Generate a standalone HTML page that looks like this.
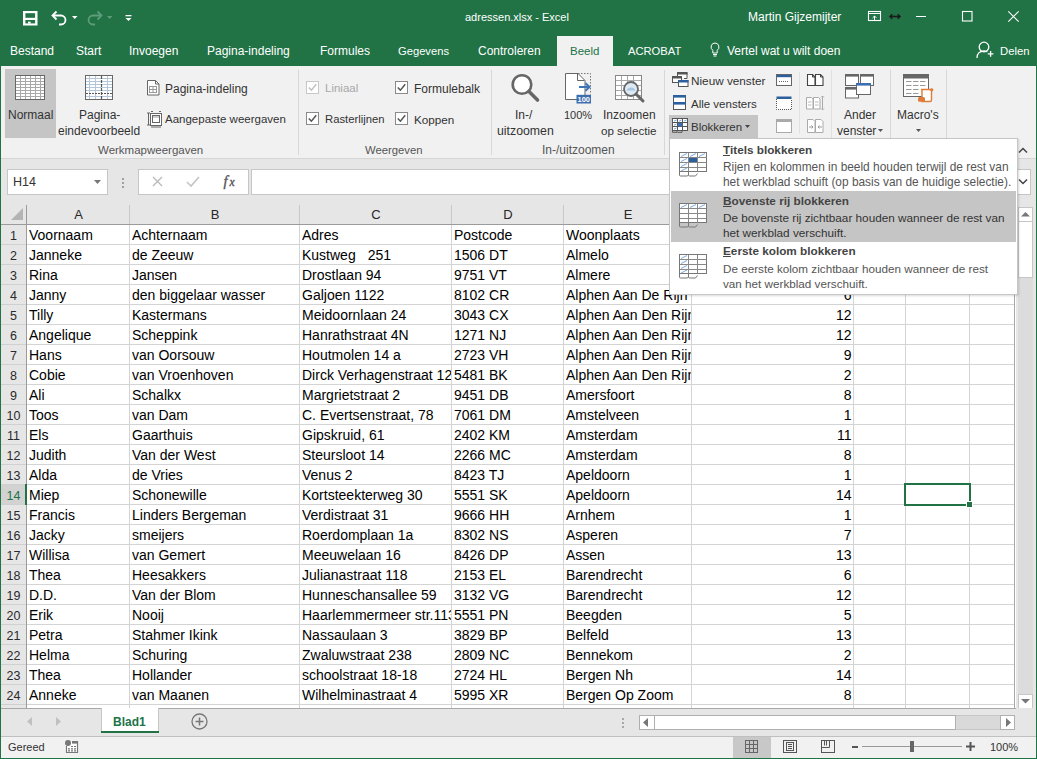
<!DOCTYPE html><html><head><meta charset="utf-8"><style>
*{margin:0;padding:0;box-sizing:border-box}
html,body{width:1037px;height:759px;overflow:hidden;background:#fff;font-family:"Liberation Sans",sans-serif}
.t{position:absolute;white-space:pre;line-height:1}
.r{position:absolute}
.s{position:absolute;overflow:visible}
</style></head><body>

<div class="r" style="left:0px;top:0px;width:1037px;height:66px;background:#217346;"></div>
<div class="r" style="left:0px;top:0px;width:1px;height:759px;background:#217346;"></div>
<div class="r" style="left:1036px;top:0px;width:1px;height:759px;background:#217346;"></div>
<div class="r" style="left:0px;top:758px;width:1037px;height:1px;background:#217346;"></div>
<svg class="s" style="left:23px;top:11px;" width="15" height="15" viewBox="0 0 15 15"><rect x="0" y="0" width="14.5" height="14.5" fill="#fff"/><rect x="2.4" y="2.2" width="9.7" height="4.6" fill="#217346"/><rect x="2.4" y="9" width="9.7" height="3.4" fill="#217346"/><rect x="5" y="10.6" width="2.6" height="2" fill="#fff"/></svg>
<svg class="s" style="left:50px;top:10px;" width="18" height="16" viewBox="0 0 18 16"><path d="M3 5.5h8a4.5 4.5 0 0 1 0 9H9" fill="none" stroke="#fff" stroke-width="1.8"/><path d="M6.5 1.5L2.5 5.5l4 4" fill="none" stroke="#fff" stroke-width="1.8"/></svg>
<svg class="s" style="left:72px;top:16px;" width="6" height="4" viewBox="0 0 6 4"><path d="M0 0h5.5L2.75 3z" fill="#fff"/></svg>
<svg class="s" style="left:86px;top:10px;" width="18" height="16" viewBox="0 0 18 16"><path d="M15 5.5H7a4.5 4.5 0 0 0 0 9h2" fill="none" stroke="#5d9c7a" stroke-width="1.8"/><path d="M11.5 1.5l4 4-4 4" fill="none" stroke="#5d9c7a" stroke-width="1.8"/></svg>
<svg class="s" style="left:107px;top:16px;" width="6" height="4" viewBox="0 0 6 4"><path d="M0 0h5.5L2.75 3z" fill="#5d9c7a"/></svg>
<svg class="s" style="left:125px;top:14px;" width="8" height="8" viewBox="0 0 8 8"><rect x="0.5" y="1" width="6" height="1.3" fill="#fff"/><path d="M0.5 4h6L3.5 7z" fill="#fff"/></svg>
<div class="t" style="left:465px;top:11.69px;font-size:11px;color:#fff;font-weight:normal;">adressen.xlsx - Excel</div>
<div class="t" style="left:748px;top:10.84px;font-size:12px;color:#fff;font-weight:normal;">Martin Gijzemijter</div>
<svg class="s" style="left:868px;top:11px;" width="14" height="11" viewBox="0 0 14 11"><rect x="0.5" y="0.5" width="12" height="9" fill="none" stroke="#fff" stroke-width="1.1"/><path d="M1 2.5h11" stroke="#fff" stroke-width="1"/><path d="M6.5 9.5V5M4.6 6.9L6.5 5l1.9 1.9" fill="none" stroke="#fff" stroke-width="1"/></svg>
<svg class="s" style="left:889px;top:13px;" width="12" height="7" viewBox="0 0 12 7"><path d="M2 3.5h8" stroke="#1a1a1a" stroke-width="1.6"/><path d="M3.3 1.2L1 3.5l2.3 2.3M8.7 1.2L11 3.5 8.7 5.8" fill="none" stroke="#1a1a1a" stroke-width="1.5"/></svg>
<div class="r" style="left:916px;top:16px;width:10px;height:1px;background:#fff;"></div>
<svg class="s" style="left:962px;top:11px;" width="11" height="11" viewBox="0 0 11 11"><rect x="0.5" y="0.5" width="9.5" height="9.5" fill="none" stroke="#fff" stroke-width="1.1"/></svg>
<svg class="s" style="left:1008px;top:11px;" width="11" height="11" viewBox="0 0 11 11"><path d="M0.3 0.3l10.4 10.4M10.7 0.3L0.3 10.7" stroke="#fff" stroke-width="1.1"/></svg>
<div class="t" style="left:10px;top:45.34px;font-size:12px;color:#fff;font-weight:normal;">Bestand</div>
<div class="t" style="left:76px;top:45.34px;font-size:12px;color:#fff;font-weight:normal;">Start</div>
<div class="t" style="left:129px;top:45.34px;font-size:12px;color:#fff;font-weight:normal;">Invoegen</div>
<div class="t" style="left:207px;top:45.34px;font-size:12px;color:#fff;font-weight:normal;">Pagina-indeling</div>
<div class="t" style="left:320px;top:45.34px;font-size:12px;color:#fff;font-weight:normal;">Formules</div>
<div class="t" style="left:398px;top:46.02px;font-size:11.2px;color:#fff;font-weight:normal;">Gegevens</div>
<div class="t" style="left:478px;top:45.34px;font-size:12px;color:#fff;font-weight:normal;">Controleren</div>
<div class="r" style="left:557px;top:36px;width:56px;height:30px;background:#f1f1f1;"></div>
<div class="t" style="left:570px;top:45.77px;font-size:11.5px;color:#217346;font-weight:normal;">Beeld</div>
<div class="t" style="left:628px;top:46.02px;font-size:11.2px;color:#fff;font-weight:normal;">ACROBAT</div>
<svg class="s" style="left:710px;top:42px;" width="10" height="15" viewBox="0 0 10 15"><path d="M5 1a4 4 0 0 0-2.2 7.3V11h4.4V8.3A4 4 0 0 0 5 1z" fill="none" stroke="#fff" stroke-width="1"/><path d="M3 12.5h4M3.5 14h3" stroke="#fff" stroke-width="1"/></svg>
<div class="t" style="left:727px;top:45.34px;font-size:12px;color:#fff;font-weight:normal;">Vertel wat u wilt doen</div>
<svg class="s" style="left:976px;top:41px;" width="18" height="18" viewBox="0 0 18 18"><circle cx="8" cy="6" r="4.8" fill="none" stroke="#fff" stroke-width="1.3"/><path d="M1 17c0-4.5 3-7 7-7 1.3 0 2.4.3 3.3.8" fill="none" stroke="#fff" stroke-width="1.3"/><path d="M11.8 12.8h5.6M14.6 10v5.8" stroke="#fff" stroke-width="1.3"/></svg>
<div class="t" style="left:1000px;top:45.93px;font-size:11.3px;color:#fff;font-weight:normal;">Delen</div>
<div class="r" style="left:1px;top:66px;width:1035px;height:92px;background:#f1f1f1;"></div>
<div class="r" style="left:1px;top:158px;width:1035px;height:1px;background:#d5d5d5;"></div>
<div class="r" style="left:5px;top:69px;width:51px;height:69px;background:#c5c5c5;"></div>
<svg class="s" style="left:15px;top:75px;" width="30" height="25" viewBox="0 0 30 25"><rect x="0.5" y="0.5" width="29" height="24" fill="#fff" stroke="#666" stroke-width="1"/><path d="M5.5 1V24" stroke="#a8a8a8" stroke-width="1" /><path d="M10.5 1V24" stroke="#a8a8a8" stroke-width="1" /><path d="M15.5 1V24" stroke="#a8a8a8" stroke-width="1" /><path d="M20.5 1V24" stroke="#a8a8a8" stroke-width="1" /><path d="M25.5 1V24" stroke="#a8a8a8" stroke-width="1" /><path d="M1 3.5H29" stroke="#a8a8a8" stroke-width="1" /><path d="M1 6.5H29" stroke="#a8a8a8" stroke-width="1" /><path d="M1 9.5H29" stroke="#a8a8a8" stroke-width="1" /><path d="M1 12.5H29" stroke="#a8a8a8" stroke-width="1" /><path d="M1 15.5H29" stroke="#a8a8a8" stroke-width="1" /><path d="M1 18.5H29" stroke="#a8a8a8" stroke-width="1" /><path d="M1 21.5H29" stroke="#a8a8a8" stroke-width="1" /></svg>
<svg class="s" style="left:85px;top:75px;" width="28" height="25" viewBox="0 0 28 25"><rect x="0.5" y="0.5" width="27" height="24" fill="#fff" stroke="#666"/><path d="M4.5 1V24" stroke="#b4c6da"/><path d="M10.5 1V24" stroke="#b4c6da"/><path d="M22.5 1V24" stroke="#b4c6da"/><path d="M1 3.5H27" stroke="#b4c6da"/><path d="M1 6.5H27" stroke="#b4c6da"/><path d="M1 9.5H27" stroke="#b4c6da"/><path d="M1 12.5H27" stroke="#b4c6da"/><path d="M1 15.5H27" stroke="#b4c6da"/><path d="M1 21.5H27" stroke="#b4c6da"/><path d="M16.5 1V24" stroke="#555" stroke-width="1.2" stroke-dasharray="3 1"/><path d="M1 18.5H27" stroke="#555" stroke-width="1.2" stroke-dasharray="2 1"/></svg>
<div class="t" style="left:8px;top:108.84px;font-size:12px;color:#333;font-weight:normal;">Normaal</div>
<div class="t" style="left:79px;top:108.84px;font-size:12px;color:#333;font-weight:normal;">Pagina-</div>
<div class="t" style="left:58px;top:124.84px;font-size:12px;color:#333;font-weight:normal;">eindevoorbeeld</div>
<svg class="s" style="left:147px;top:80px;" width="13" height="16" viewBox="0 0 13 16"><path d="M0.5 0.5h8l3.5 3.5v11H0.5z" fill="#fff" stroke="#666"/><path d="M8.5 0.5v3.5h3.5" fill="none" stroke="#666"/><rect x="2.5" y="6.5" width="7" height="6" fill="none" stroke="#999"/><path d="M6 6.5v6M2.5 9.5h7" stroke="#999"/></svg>
<div class="t" style="left:165px;top:82.84px;font-size:12px;color:#333;font-weight:normal;">Pagina-indeling</div>
<svg class="s" style="left:146px;top:111px;" width="17" height="16" viewBox="0 0 17 16"><path d="M2.5 2v12M1 2h3M1 14h3" stroke="#666"/><rect x="4.5" y="2.5" width="11" height="12" fill="#fff" stroke="#666"/><rect x="6.5" y="4.5" width="7" height="7" fill="none" stroke="#666"/><path d="M7 6h6" stroke="#999"/><path d="M5 0.5h2M13 0.5h2M5 16h10" stroke="#666"/></svg>
<div class="t" style="left:165px;top:114.27px;font-size:11.5px;color:#333;font-weight:normal;">Aangepaste weergaven</div>
<div class="t" style="left:98px;top:144.87px;font-size:11.5px;color:#555;font-weight:normal;">Werkmapweergaven</div>
<div class="r" style="left:298px;top:70px;width:1px;height:85px;background:#d8d8d8;"></div>
<svg class="s" style="left:306px;top:81px;" width="13" height="13" viewBox="0 0 13 13"><rect x="0.5" y="0.5" width="12" height="12" fill="#fff" stroke="#c8c8c8"/><path d="M2.8 6.4l2.6 2.8 4.8-6" fill="none" stroke="#c0c0c0" stroke-width="1.5"/></svg>
<div class="t" style="left:325px;top:83.27px;font-size:11.5px;color:#a8a8a8;font-weight:normal;">Liniaal</div>
<svg class="s" style="left:306px;top:112px;" width="13" height="13" viewBox="0 0 13 13"><rect x="0.5" y="0.5" width="12" height="12" fill="#fff" stroke="#8a8a8a"/><path d="M2.8 6.4l2.6 2.8 4.8-6" fill="none" stroke="#555" stroke-width="1.5"/></svg>
<div class="t" style="left:325px;top:114.43px;font-size:11.3px;color:#333;font-weight:normal;">Rasterlijnen</div>
<svg class="s" style="left:395px;top:81px;" width="13" height="13" viewBox="0 0 13 13"><rect x="0.5" y="0.5" width="12" height="12" fill="#fff" stroke="#8a8a8a"/><path d="M2.8 6.4l2.6 2.8 4.8-6" fill="none" stroke="#555" stroke-width="1.5"/></svg>
<div class="t" style="left:414px;top:82.84px;font-size:12px;color:#333;font-weight:normal;">Formulebalk</div>
<svg class="s" style="left:395px;top:112px;" width="13" height="13" viewBox="0 0 13 13"><rect x="0.5" y="0.5" width="12" height="12" fill="#fff" stroke="#8a8a8a"/><path d="M2.8 6.4l2.6 2.8 4.8-6" fill="none" stroke="#555" stroke-width="1.5"/></svg>
<div class="t" style="left:414px;top:114.10px;font-size:11.7px;color:#333;font-weight:normal;">Koppen</div>
<div class="t" style="left:365px;top:145.03px;font-size:11.3px;color:#555;font-weight:normal;">Weergeven</div>
<div class="r" style="left:491px;top:70px;width:1px;height:85px;background:#d8d8d8;"></div>
<svg class="s" style="left:510px;top:73px;" width="32" height="30" viewBox="0 0 32 30"><circle cx="12" cy="11.5" r="9.3" fill="#fff" stroke="#666" stroke-width="2.6"/><path d="M19 18.5l8.5 8.5" stroke="#666" stroke-width="3.6" stroke-linecap="round"/></svg>
<div class="t" style="left:515px;top:108.84px;font-size:12px;color:#333;font-weight:normal;">In-/</div>
<div class="t" style="left:497px;top:124.59px;font-size:12.3px;color:#333;font-weight:normal;">uitzoomen</div>
<svg class="s" style="left:564px;top:72px;" width="30" height="33" viewBox="0 0 30 33"><path d="M1.5 1.5h12.5l7 7v19H1.5z" fill="#fff" stroke="#666"/><path d="M13.5 1.5v7h7" fill="none" stroke="#666"/><path d="M14 1.5h12.5v21" fill="none" stroke="#777" stroke-dasharray="1.5 1.5"/><path d="M15 15h10M21.5 11.3L25.5 15l-4 3.7" fill="none" stroke="#3d74b8" stroke-width="2"/><rect x="12.5" y="22.8" width="14.5" height="8.7" fill="#3d6fb0"/><text x="19.8" y="30" font-size="7.5" font-family="Liberation Sans" fill="#fff" text-anchor="middle" font-weight="bold">100</text></svg>
<div class="t" style="left:564px;top:109.69px;font-size:11px;color:#333;font-weight:normal;">100%</div>
<svg class="s" style="left:615px;top:75px;" width="31" height="30" viewBox="0 0 31 30"><rect x="0.5" y="0.5" width="26" height="24" fill="#fff" stroke="#888"/><path d="M6.5 1V24" stroke="#aaa"/><path d="M12.5 1V24" stroke="#aaa"/><path d="M18.5 1V24" stroke="#aaa"/><path d="M1 5.5H26" stroke="#aaa"/><path d="M1 10.5H26" stroke="#aaa"/><path d="M1 15.5H26" stroke="#aaa"/><path d="M1 20.5H26" stroke="#aaa"/><circle cx="16" cy="14" r="7" fill="#dfe9f3" stroke="#666" stroke-width="1.8"/><path d="M11.5 15.5c1-2 2.5-3 4.5-3s3.5 1 4.5 3" fill="#a8c6e6"/><path d="M21 19l7 7" stroke="#666" stroke-width="3" stroke-linecap="round"/></svg>
<div class="t" style="left:603px;top:108.84px;font-size:12px;color:#333;font-weight:normal;">Inzoomen</div>
<div class="t" style="left:601px;top:125.18px;font-size:11.6px;color:#333;font-weight:normal;">op selectie</div>
<div class="t" style="left:542px;top:144.44px;font-size:12px;color:#555;font-weight:normal;">In-/uitzoomen</div>
<div class="r" style="left:664px;top:70px;width:1px;height:85px;background:#d8d8d8;"></div>
<div class="r" style="left:669px;top:115px;width:89px;height:23px;background:#c5c5c5;"></div>
<svg class="s" style="left:672px;top:72px;" width="17" height="15" viewBox="0 0 17 15"><path d="M5.5 4V0.5h9.5v6h-3" fill="#fff" stroke="#555"/><rect x="5" y="0" width="10.5" height="2.5" fill="#555"/><rect x="0.5" y="4.5" width="9" height="6" fill="#fff" stroke="#555"/><rect x="0" y="4" width="10" height="2.5" fill="#555"/><rect x="6.5" y="8.5" width="9.5" height="6" fill="#fff" stroke="#555"/><rect x="6" y="8" width="10.5" height="2.5" fill="#2c5f9e"/></svg>
<div class="t" style="left:691px;top:75.05px;font-size:11.75px;color:#333;font-weight:normal;">Nieuw venster</div>
<svg class="s" style="left:673px;top:95px;" width="14" height="15" viewBox="0 0 14 15"><rect x="0.5" y="0.5" width="12" height="14" fill="#fff" stroke="#555"/><rect x="0" y="0" width="13" height="2.6" fill="#2c5f9e"/><rect x="0" y="7" width="13" height="2.6" fill="#2c5f9e"/></svg>
<div class="t" style="left:691px;top:99.27px;font-size:11.5px;color:#333;font-weight:normal;">Alle vensters</div>
<svg class="s" style="left:672px;top:118px;" width="16" height="15" viewBox="0 0 16 15"><rect x="0.5" y="0.5" width="15" height="12" fill="#fff" stroke="#555"/><path d="M5.5 1v11.5M10.5 1v11.5M1 4.5h14.5M1 8.5h14.5" stroke="#555"/><rect x="6" y="5" width="4.5" height="3.5" fill="#3d6fb0"/><path d="M2 3.2l2.5-1.2M7 3.2l2.5-1.2M12 3.2l2.5-1.2M2 7.2l2.5-1.2M2 11.2l2.5-1.2" stroke="#6a9fd8" stroke-width="0.9"/><path d="M0.5 12.5v1.8h4.5v-1.8M5.5 14.3h4.5v-1.8" fill="none" stroke="#555"/></svg>
<div class="t" style="left:691px;top:122.27px;font-size:11.5px;color:#333;font-weight:normal;">Blokkeren</div>
<svg class="s" style="left:745px;top:125px;" width="6" height="4" viewBox="0 0 6 4"><path d="M0 0h5L2.5 3z" fill="#444"/></svg>
<svg class="s" style="left:776px;top:74px;" width="16" height="12" viewBox="0 0 16 12"><rect x="0.5" y="0.5" width="15" height="11" fill="#fff" stroke="#666"/><rect x="1" y="1" width="14" height="2.2" fill="#2c5f9e"/><path d="M3 7.5h10" stroke="#666" stroke-dasharray="1 1"/></svg>
<svg class="s" style="left:776px;top:96px;" width="16" height="14" viewBox="0 0 16 14"><path d="M0.5 3v10.5h15V3" fill="#fff" stroke="#555" stroke-dasharray="1 1"/><rect x="0.5" y="0.5" width="15" height="2.5" fill="#2c5f9e"/></svg>
<svg class="s" style="left:776px;top:119px;" width="16" height="14" viewBox="0 0 16 14"><rect x="0.5" y="0.5" width="15" height="13" fill="#fff" stroke="#aaa"/><rect x="1" y="1" width="14" height="2" fill="#aaa"/></svg>
<div class="r" style="left:799px;top:72px;width:1px;height:62px;background:#e2e2e2;"></div>
<svg class="s" style="left:807px;top:74px;" width="17" height="12" viewBox="0 0 17 12"><path d="M0.5 0.5h5l2.5 2.5v8.5H0.5z" fill="#fff" stroke="#444" stroke-width="1.1"/><path d="M8.5 0.5h5l2.5 2.5v8.5H8.5z" fill="#fff" stroke="#444" stroke-width="1.1"/><path d="M5.5 0.5v2.5h2.5M13.5 0.5v2.5h2.5" fill="none" stroke="#444"/></svg>
<svg class="s" style="left:806px;top:96px;" width="18" height="14" viewBox="0 0 18 14"><path d="M0.5 1.5h5l1.5 1.5v10H0.5zM7.5 1.5h5l1.5 1.5v10H7.5z" fill="#fff" stroke="#aaa"/><path d="M2 6h3.5M2 9h3.5M9 6h3.5M9 9h3.5" stroke="#bbb"/><path d="M16.5 0v14" stroke="#aaa"/><path d="M15 1.5l1.5-1.5 1.5 1.5M15 12.5l1.5 1.5 1.5-1.5" fill="none" stroke="#aaa"/></svg>
<svg class="s" style="left:807px;top:119px;" width="17" height="14" viewBox="0 0 17 14"><path d="M0.5 0.5h5.5l2 2V13.5H0.5zM8.5 0.5h5.5l2 2V13.5H8.5z" fill="#fff" stroke="#aaa"/><path d="M2 8h4M4.5 6.5L6 8 4.5 9.5M15 8h-4M12.5 6.5L11 8l1.5 1.5" fill="none" stroke="#999"/></svg>
<div class="r" style="left:831px;top:70px;width:1px;height:85px;background:#e0e0e0;"></div>
<svg class="s" style="left:845px;top:74px;" width="30" height="25" viewBox="0 0 30 25"><rect x="0.5" y="0.5" width="13" height="11" fill="#fff" stroke="#666"/><rect x="0" y="0" width="14" height="2.6" fill="#666"/><rect x="15.5" y="0.5" width="13" height="11" fill="#fff" stroke="#666"/><rect x="15" y="0" width="14" height="2.6" fill="#666"/><rect x="0.5" y="13.5" width="13" height="10.5" fill="#fff" stroke="#666"/><rect x="0" y="13" width="14" height="2.6" fill="#666"/><rect x="11.5" y="9.5" width="14" height="11" fill="#fff" stroke="#666"/><rect x="11" y="9" width="15" height="2.6" fill="#3d6fb0"/></svg>
<div class="t" style="left:844px;top:108.84px;font-size:12px;color:#333;font-weight:normal;">Ander</div>
<div class="t" style="left:837px;top:124.84px;font-size:12px;color:#333;font-weight:normal;">venster</div>
<svg class="s" style="left:878px;top:129px;" width="6" height="4" viewBox="0 0 6 4"><path d="M0 0h5L2.5 3z" fill="#555"/></svg>
<div class="r" style="left:890px;top:70px;width:1px;height:85px;background:#d8d8d8;"></div>
<svg class="s" style="left:903px;top:74px;" width="32" height="29" viewBox="0 0 32 29"><rect x="0.5" y="0.5" width="25" height="22" fill="#fff" stroke="#666"/><rect x="0" y="0" width="26" height="4.5" fill="#666"/><path d="M3 7.5h5.5M10 7.5h5.5M17 7.5h5.5M3 11.5h5.5M10 11.5h5.5M17 11.5h5.5M3 15.5h5.5M10 15.5h5.5M3 19.5h5.5M10 19.5h5.5" stroke="#999"/><path d="M18 15.5h10.5v10.5c0 1-.5 1.5-1.5 1.5H19V16.5c0-.6-.4-1-1-1z" fill="#fff" stroke="#e07b39" stroke-width="1.4"/><circle cx="28.8" cy="15.8" r="1.6" fill="#e07b39"/><rect x="15" y="23" width="7" height="4.8" rx="1.5" fill="#e07b39"/></svg>
<div class="t" style="left:897px;top:108.84px;font-size:12px;color:#333;font-weight:normal;">Macro's</div>
<svg class="s" style="left:916px;top:129px;" width="6" height="4" viewBox="0 0 6 4"><path d="M0 0h5L2.5 3z" fill="#555"/></svg>
<div class="r" style="left:946px;top:70px;width:1px;height:85px;background:#d8d8d8;"></div>
<div class="r" style="left:1px;top:159px;width:1035px;height:46px;background:#e6e6e6;"></div>
<div class="r" style="left:7px;top:169px;width:101px;height:26px;background:#fff;border:1px solid #c6c6c6"></div>
<div class="t" style="left:13px;top:176.42px;font-size:12.5px;color:#333;font-weight:normal;">H14</div>
<svg class="s" style="left:94px;top:180px;" width="8" height="5" viewBox="0 0 8 5"><path d="M0 0h7L3.5 4z" fill="#777"/></svg>
<div class="r" style="left:122px;top:178px;width:2px;height:2px;background:#a0a0a0;"></div>
<div class="r" style="left:122px;top:182px;width:2px;height:2px;background:#a0a0a0;"></div>
<div class="r" style="left:122px;top:186px;width:2px;height:2px;background:#a0a0a0;"></div>
<div class="r" style="left:138px;top:169px;width:111px;height:26px;background:#fff;border:1px solid #c6c6c6"></div>
<svg class="s" style="left:152px;top:176px;" width="11" height="11" viewBox="0 0 11 11"><path d="M1 1l9 9M10 1l-9 9" stroke="#b8b8b8" stroke-width="1.3"/></svg>
<svg class="s" style="left:186px;top:176px;" width="14" height="11" viewBox="0 0 14 11"><path d="M1 6l4 4 8-9" fill="none" stroke="#c4c4c4" stroke-width="1.6"/></svg>
<svg class="s" style="left:222px;top:173px;" width="18" height="16" viewBox="0 0 18 16"><text x="1.5" y="12.5" font-family="Liberation Serif" font-style="italic" font-size="14.5" fill="#555" stroke="#555" stroke-width="0.35">f</text><text x="7.5" y="13" font-family="Liberation Serif" font-style="italic" font-size="11.5" fill="#555" stroke="#555" stroke-width="0.35">x</text></svg>
<div class="r" style="left:251px;top:169px;width:780px;height:26px;background:#fff;border:1px solid #c6c6c6"></div>
<svg class="s" style="left:1018px;top:147px;" width="10" height="7" viewBox="0 0 10 7"><path d="M1 5.5l4-4 4 4" fill="none" stroke="#444" stroke-width="1.5"/></svg>
<svg class="s" style="left:1018px;top:178px;" width="10" height="7" viewBox="0 0 10 7"><path d="M1 1.5l4 4 4-4" fill="none" stroke="#444" stroke-width="1.5"/></svg>
<div class="r" style="left:1px;top:205px;width:1015px;height:20px;background:#e6e6e6;"></div>
<div class="r" style="left:1px;top:225px;width:26px;height:484px;background:#e6e6e6;"></div>
<svg class="s" style="left:11px;top:208px;" width="13" height="13" viewBox="0 0 13 13"><path d="M12 0V12H0z" fill="#b4b4b4"/></svg>
<div class="r" style="left:27px;top:225px;width:988px;height:483px;background:#fff;"></div>
<div class="r" style="left:27px;top:244px;width:988px;height:1px;background:#d4d4d4;"></div>
<div class="r" style="left:1px;top:244px;width:26px;height:1px;background:#d0d0d0;"></div>
<div class="r" style="left:27px;top:264px;width:988px;height:1px;background:#d4d4d4;"></div>
<div class="r" style="left:1px;top:264px;width:26px;height:1px;background:#d0d0d0;"></div>
<div class="r" style="left:27px;top:284px;width:988px;height:1px;background:#d4d4d4;"></div>
<div class="r" style="left:1px;top:284px;width:26px;height:1px;background:#d0d0d0;"></div>
<div class="r" style="left:27px;top:304px;width:988px;height:1px;background:#d4d4d4;"></div>
<div class="r" style="left:1px;top:304px;width:26px;height:1px;background:#d0d0d0;"></div>
<div class="r" style="left:27px;top:324px;width:988px;height:1px;background:#d4d4d4;"></div>
<div class="r" style="left:1px;top:324px;width:26px;height:1px;background:#d0d0d0;"></div>
<div class="r" style="left:27px;top:344px;width:988px;height:1px;background:#d4d4d4;"></div>
<div class="r" style="left:1px;top:344px;width:26px;height:1px;background:#d0d0d0;"></div>
<div class="r" style="left:27px;top:364px;width:988px;height:1px;background:#d4d4d4;"></div>
<div class="r" style="left:1px;top:364px;width:26px;height:1px;background:#d0d0d0;"></div>
<div class="r" style="left:27px;top:384px;width:988px;height:1px;background:#d4d4d4;"></div>
<div class="r" style="left:1px;top:384px;width:26px;height:1px;background:#d0d0d0;"></div>
<div class="r" style="left:27px;top:404px;width:988px;height:1px;background:#d4d4d4;"></div>
<div class="r" style="left:1px;top:404px;width:26px;height:1px;background:#d0d0d0;"></div>
<div class="r" style="left:27px;top:424px;width:988px;height:1px;background:#d4d4d4;"></div>
<div class="r" style="left:1px;top:424px;width:26px;height:1px;background:#d0d0d0;"></div>
<div class="r" style="left:27px;top:444px;width:988px;height:1px;background:#d4d4d4;"></div>
<div class="r" style="left:1px;top:444px;width:26px;height:1px;background:#d0d0d0;"></div>
<div class="r" style="left:27px;top:464px;width:988px;height:1px;background:#d4d4d4;"></div>
<div class="r" style="left:1px;top:464px;width:26px;height:1px;background:#d0d0d0;"></div>
<div class="r" style="left:27px;top:484px;width:988px;height:1px;background:#d4d4d4;"></div>
<div class="r" style="left:1px;top:484px;width:26px;height:1px;background:#d0d0d0;"></div>
<div class="r" style="left:27px;top:504px;width:988px;height:1px;background:#d4d4d4;"></div>
<div class="r" style="left:1px;top:504px;width:26px;height:1px;background:#d0d0d0;"></div>
<div class="r" style="left:27px;top:524px;width:988px;height:1px;background:#d4d4d4;"></div>
<div class="r" style="left:1px;top:524px;width:26px;height:1px;background:#d0d0d0;"></div>
<div class="r" style="left:27px;top:544px;width:988px;height:1px;background:#d4d4d4;"></div>
<div class="r" style="left:1px;top:544px;width:26px;height:1px;background:#d0d0d0;"></div>
<div class="r" style="left:27px;top:564px;width:988px;height:1px;background:#d4d4d4;"></div>
<div class="r" style="left:1px;top:564px;width:26px;height:1px;background:#d0d0d0;"></div>
<div class="r" style="left:27px;top:584px;width:988px;height:1px;background:#d4d4d4;"></div>
<div class="r" style="left:1px;top:584px;width:26px;height:1px;background:#d0d0d0;"></div>
<div class="r" style="left:27px;top:604px;width:988px;height:1px;background:#d4d4d4;"></div>
<div class="r" style="left:1px;top:604px;width:26px;height:1px;background:#d0d0d0;"></div>
<div class="r" style="left:27px;top:624px;width:988px;height:1px;background:#d4d4d4;"></div>
<div class="r" style="left:1px;top:624px;width:26px;height:1px;background:#d0d0d0;"></div>
<div class="r" style="left:27px;top:644px;width:988px;height:1px;background:#d4d4d4;"></div>
<div class="r" style="left:1px;top:644px;width:26px;height:1px;background:#d0d0d0;"></div>
<div class="r" style="left:27px;top:664px;width:988px;height:1px;background:#d4d4d4;"></div>
<div class="r" style="left:1px;top:664px;width:26px;height:1px;background:#d0d0d0;"></div>
<div class="r" style="left:27px;top:684px;width:988px;height:1px;background:#d4d4d4;"></div>
<div class="r" style="left:1px;top:684px;width:26px;height:1px;background:#d0d0d0;"></div>
<div class="r" style="left:27px;top:704px;width:988px;height:1px;background:#d4d4d4;"></div>
<div class="r" style="left:1px;top:704px;width:26px;height:1px;background:#d0d0d0;"></div>
<div class="r" style="left:27px;top:724px;width:988px;height:1px;background:#d4d4d4;"></div>
<div class="r" style="left:1px;top:724px;width:26px;height:1px;background:#d0d0d0;"></div>
<div class="r" style="left:129px;top:225px;width:1px;height:483px;background:#d4d4d4;"></div>
<div class="r" style="left:129px;top:205px;width:1px;height:20px;background:#c8c8c8;"></div>
<div class="r" style="left:299px;top:225px;width:1px;height:483px;background:#d4d4d4;"></div>
<div class="r" style="left:299px;top:205px;width:1px;height:20px;background:#c8c8c8;"></div>
<div class="r" style="left:451px;top:225px;width:1px;height:483px;background:#d4d4d4;"></div>
<div class="r" style="left:451px;top:205px;width:1px;height:20px;background:#c8c8c8;"></div>
<div class="r" style="left:563px;top:225px;width:1px;height:483px;background:#d4d4d4;"></div>
<div class="r" style="left:563px;top:205px;width:1px;height:20px;background:#c8c8c8;"></div>
<div class="r" style="left:691px;top:225px;width:1px;height:483px;background:#d4d4d4;"></div>
<div class="r" style="left:691px;top:205px;width:1px;height:20px;background:#c8c8c8;"></div>
<div class="r" style="left:853px;top:225px;width:1px;height:483px;background:#d4d4d4;"></div>
<div class="r" style="left:853px;top:205px;width:1px;height:20px;background:#c8c8c8;"></div>
<div class="r" style="left:905px;top:225px;width:1px;height:483px;background:#d4d4d4;"></div>
<div class="r" style="left:905px;top:205px;width:1px;height:20px;background:#c8c8c8;"></div>
<div class="r" style="left:969px;top:225px;width:1px;height:483px;background:#d4d4d4;"></div>
<div class="r" style="left:969px;top:205px;width:1px;height:20px;background:#c8c8c8;"></div>
<div class="r" style="left:1014px;top:225px;width:1px;height:483px;background:#d4d4d4;"></div>
<div class="r" style="left:1014px;top:205px;width:1px;height:20px;background:#c8c8c8;"></div>
<div class="r" style="left:1px;top:224px;width:1015px;height:1px;background:#9b9b9b;"></div>
<div class="r" style="left:26px;top:205px;width:1px;height:503px;background:#9b9b9b;"></div>
<div class="r" style="left:1px;top:485px;width:25px;height:19px;background:#d2d2d2;"></div>
<div class="r" style="left:25px;top:484px;width:2px;height:21px;background:#217346;"></div>
<div class="t" style="left:27px;top:208px;width:103px;text-align:center;font-size:13px;color:#262626">A</div>
<div class="t" style="left:130px;top:208px;width:170px;text-align:center;font-size:13px;color:#262626">B</div>
<div class="t" style="left:300px;top:208px;width:152px;text-align:center;font-size:13px;color:#262626">C</div>
<div class="t" style="left:452px;top:208px;width:112px;text-align:center;font-size:13px;color:#262626">D</div>
<div class="t" style="left:564px;top:208px;width:128px;text-align:center;font-size:13px;color:#262626">E</div>
<div class="t" style="left:692px;top:208px;width:162px;text-align:center;font-size:13px;color:#262626">F</div>
<div class="t" style="left:854px;top:208px;width:52px;text-align:center;font-size:13px;color:#262626">G</div>
<div class="t" style="left:906px;top:208px;width:64px;text-align:center;font-size:13px;color:#262626">H</div>
<div class="t" style="left:970px;top:208px;width:45px;text-align:center;font-size:13px;color:#262626">I</div>
<div class="t" style="left:1px;top:229.92px;width:25px;text-align:center;font-size:12.5px;color:#2a2a2a">1</div>
<div class="t" style="left:29px;top:228.15px;width:100px;height:18px;overflow:hidden;font-size:14px;color:#000">Voornaam</div>
<div class="t" style="left:132px;top:228.15px;width:167px;height:18px;overflow:hidden;font-size:14px;color:#000">Achternaam</div>
<div class="t" style="left:302px;top:228.15px;width:149px;height:18px;overflow:hidden;font-size:14px;color:#000">Adres</div>
<div class="t" style="left:454px;top:228.15px;width:109px;height:18px;overflow:hidden;font-size:14px;color:#000">Postcode</div>
<div class="t" style="left:566px;top:228.15px;width:125px;height:18px;overflow:hidden;font-size:14px;color:#000">Woonplaats</div>
<div class="t" style="left:1px;top:249.92px;width:25px;text-align:center;font-size:12.5px;color:#2a2a2a">2</div>
<div class="t" style="left:29px;top:248.15px;width:100px;height:18px;overflow:hidden;font-size:14px;color:#000">Janneke</div>
<div class="t" style="left:132px;top:248.15px;width:167px;height:18px;overflow:hidden;font-size:14px;color:#000">de Zeeuw</div>
<div class="t" style="left:302px;top:248.15px;width:149px;height:18px;overflow:hidden;font-size:14px;color:#000">Kustweg<span style="margin-left:12px">251</span></div>
<div class="t" style="left:454px;top:248.15px;width:109px;height:18px;overflow:hidden;font-size:14px;color:#000">1506 DT</div>
<div class="t" style="left:566px;top:248.15px;width:125px;height:18px;overflow:hidden;font-size:14px;color:#000">Almelo</div>
<div class="t" style="left:1px;top:269.92px;width:25px;text-align:center;font-size:12.5px;color:#2a2a2a">3</div>
<div class="t" style="left:29px;top:268.15px;width:100px;height:18px;overflow:hidden;font-size:14px;color:#000">Rina</div>
<div class="t" style="left:132px;top:268.15px;width:167px;height:18px;overflow:hidden;font-size:14px;color:#000">Jansen</div>
<div class="t" style="left:302px;top:268.15px;width:149px;height:18px;overflow:hidden;font-size:14px;color:#000">Drostlaan 94</div>
<div class="t" style="left:454px;top:268.15px;width:109px;height:18px;overflow:hidden;font-size:14px;color:#000">9751 VT</div>
<div class="t" style="left:566px;top:268.15px;width:125px;height:18px;overflow:hidden;font-size:14px;color:#000">Almere</div>
<div class="t" style="left:1px;top:289.92px;width:25px;text-align:center;font-size:12.5px;color:#2a2a2a">4</div>
<div class="t" style="left:29px;top:288.15px;width:100px;height:18px;overflow:hidden;font-size:14px;color:#000">Janny</div>
<div class="t" style="left:132px;top:288.15px;width:167px;height:18px;overflow:hidden;font-size:14px;color:#000">den biggelaar wasser</div>
<div class="t" style="left:302px;top:288.15px;width:149px;height:18px;overflow:hidden;font-size:14px;color:#000">Galjoen 1122</div>
<div class="t" style="left:454px;top:288.15px;width:109px;height:18px;overflow:hidden;font-size:14px;color:#000">8102 CR</div>
<div class="t" style="left:566px;top:288.15px;width:125px;height:18px;overflow:hidden;font-size:14px;color:#000">Alphen Aan De Rijn</div>
<div class="t" style="left:692px;top:288.15px;width:159.5px;text-align:right;font-size:14px;color:#000">6</div>
<div class="t" style="left:1px;top:309.92px;width:25px;text-align:center;font-size:12.5px;color:#2a2a2a">5</div>
<div class="t" style="left:29px;top:308.15px;width:100px;height:18px;overflow:hidden;font-size:14px;color:#000">Tilly</div>
<div class="t" style="left:132px;top:308.15px;width:167px;height:18px;overflow:hidden;font-size:14px;color:#000">Kastermans</div>
<div class="t" style="left:302px;top:308.15px;width:149px;height:18px;overflow:hidden;font-size:14px;color:#000">Meidoornlaan 24</div>
<div class="t" style="left:454px;top:308.15px;width:109px;height:18px;overflow:hidden;font-size:14px;color:#000">3043 CX</div>
<div class="t" style="left:566px;top:308.15px;width:125px;height:18px;overflow:hidden;font-size:14px;color:#000">Alphen Aan Den Rijn</div>
<div class="t" style="left:692px;top:308.15px;width:159.5px;text-align:right;font-size:14px;color:#000">12</div>
<div class="t" style="left:1px;top:329.92px;width:25px;text-align:center;font-size:12.5px;color:#2a2a2a">6</div>
<div class="t" style="left:29px;top:328.15px;width:100px;height:18px;overflow:hidden;font-size:14px;color:#000">Angelique</div>
<div class="t" style="left:132px;top:328.15px;width:167px;height:18px;overflow:hidden;font-size:14px;color:#000">Scheppink</div>
<div class="t" style="left:302px;top:328.15px;width:149px;height:18px;overflow:hidden;font-size:14px;color:#000">Hanrathstraat 4N</div>
<div class="t" style="left:454px;top:328.15px;width:109px;height:18px;overflow:hidden;font-size:14px;color:#000">1271 NJ</div>
<div class="t" style="left:566px;top:328.15px;width:125px;height:18px;overflow:hidden;font-size:14px;color:#000">Alphen Aan Den Rijn</div>
<div class="t" style="left:692px;top:328.15px;width:159.5px;text-align:right;font-size:14px;color:#000">12</div>
<div class="t" style="left:1px;top:349.92px;width:25px;text-align:center;font-size:12.5px;color:#2a2a2a">7</div>
<div class="t" style="left:29px;top:348.15px;width:100px;height:18px;overflow:hidden;font-size:14px;color:#000">Hans</div>
<div class="t" style="left:132px;top:348.15px;width:167px;height:18px;overflow:hidden;font-size:14px;color:#000">van Oorsouw</div>
<div class="t" style="left:302px;top:348.15px;width:149px;height:18px;overflow:hidden;font-size:14px;color:#000">Houtmolen 14 a</div>
<div class="t" style="left:454px;top:348.15px;width:109px;height:18px;overflow:hidden;font-size:14px;color:#000">2723 VH</div>
<div class="t" style="left:566px;top:348.15px;width:125px;height:18px;overflow:hidden;font-size:14px;color:#000">Alphen Aan Den Rijn</div>
<div class="t" style="left:692px;top:348.15px;width:159.5px;text-align:right;font-size:14px;color:#000">9</div>
<div class="t" style="left:1px;top:369.92px;width:25px;text-align:center;font-size:12.5px;color:#2a2a2a">8</div>
<div class="t" style="left:29px;top:368.15px;width:100px;height:18px;overflow:hidden;font-size:14px;color:#000">Cobie</div>
<div class="t" style="left:132px;top:368.15px;width:167px;height:18px;overflow:hidden;font-size:14px;color:#000">van Vroenhoven</div>
<div class="t" style="left:302px;top:368.15px;width:149px;height:18px;overflow:hidden;font-size:14px;color:#000">Dirck Verhagenstraat 120</div>
<div class="t" style="left:454px;top:368.15px;width:109px;height:18px;overflow:hidden;font-size:14px;color:#000">5481 BK</div>
<div class="t" style="left:566px;top:368.15px;width:125px;height:18px;overflow:hidden;font-size:14px;color:#000">Alphen Aan Den Rijn</div>
<div class="t" style="left:692px;top:368.15px;width:159.5px;text-align:right;font-size:14px;color:#000">2</div>
<div class="t" style="left:1px;top:389.92px;width:25px;text-align:center;font-size:12.5px;color:#2a2a2a">9</div>
<div class="t" style="left:29px;top:388.15px;width:100px;height:18px;overflow:hidden;font-size:14px;color:#000">Ali</div>
<div class="t" style="left:132px;top:388.15px;width:167px;height:18px;overflow:hidden;font-size:14px;color:#000">Schalkx</div>
<div class="t" style="left:302px;top:388.15px;width:149px;height:18px;overflow:hidden;font-size:14px;color:#000">Margrietstraat 2</div>
<div class="t" style="left:454px;top:388.15px;width:109px;height:18px;overflow:hidden;font-size:14px;color:#000">9451 DB</div>
<div class="t" style="left:566px;top:388.15px;width:125px;height:18px;overflow:hidden;font-size:14px;color:#000">Amersfoort</div>
<div class="t" style="left:692px;top:388.15px;width:159.5px;text-align:right;font-size:14px;color:#000">8</div>
<div class="t" style="left:1px;top:409.92px;width:25px;text-align:center;font-size:12.5px;color:#2a2a2a">10</div>
<div class="t" style="left:29px;top:408.15px;width:100px;height:18px;overflow:hidden;font-size:14px;color:#000">Toos</div>
<div class="t" style="left:132px;top:408.15px;width:167px;height:18px;overflow:hidden;font-size:14px;color:#000">van Dam</div>
<div class="t" style="left:302px;top:408.15px;width:149px;height:18px;overflow:hidden;font-size:14px;color:#000">C. Evertsenstraat, 78</div>
<div class="t" style="left:454px;top:408.15px;width:109px;height:18px;overflow:hidden;font-size:14px;color:#000">7061 DM</div>
<div class="t" style="left:566px;top:408.15px;width:125px;height:18px;overflow:hidden;font-size:14px;color:#000">Amstelveen</div>
<div class="t" style="left:692px;top:408.15px;width:159.5px;text-align:right;font-size:14px;color:#000">1</div>
<div class="t" style="left:1px;top:429.92px;width:25px;text-align:center;font-size:12.5px;color:#2a2a2a">11</div>
<div class="t" style="left:29px;top:428.15px;width:100px;height:18px;overflow:hidden;font-size:14px;color:#000">Els</div>
<div class="t" style="left:132px;top:428.15px;width:167px;height:18px;overflow:hidden;font-size:14px;color:#000">Gaarthuis</div>
<div class="t" style="left:302px;top:428.15px;width:149px;height:18px;overflow:hidden;font-size:14px;color:#000">Gipskruid, 61</div>
<div class="t" style="left:454px;top:428.15px;width:109px;height:18px;overflow:hidden;font-size:14px;color:#000">2402 KM</div>
<div class="t" style="left:566px;top:428.15px;width:125px;height:18px;overflow:hidden;font-size:14px;color:#000">Amsterdam</div>
<div class="t" style="left:692px;top:428.15px;width:159.5px;text-align:right;font-size:14px;color:#000">11</div>
<div class="t" style="left:1px;top:449.92px;width:25px;text-align:center;font-size:12.5px;color:#2a2a2a">12</div>
<div class="t" style="left:29px;top:448.15px;width:100px;height:18px;overflow:hidden;font-size:14px;color:#000">Judith</div>
<div class="t" style="left:132px;top:448.15px;width:167px;height:18px;overflow:hidden;font-size:14px;color:#000">Van der West</div>
<div class="t" style="left:302px;top:448.15px;width:149px;height:18px;overflow:hidden;font-size:14px;color:#000">Steursloot 14</div>
<div class="t" style="left:454px;top:448.15px;width:109px;height:18px;overflow:hidden;font-size:14px;color:#000">2266 MC</div>
<div class="t" style="left:566px;top:448.15px;width:125px;height:18px;overflow:hidden;font-size:14px;color:#000">Amsterdam</div>
<div class="t" style="left:692px;top:448.15px;width:159.5px;text-align:right;font-size:14px;color:#000">8</div>
<div class="t" style="left:1px;top:469.92px;width:25px;text-align:center;font-size:12.5px;color:#2a2a2a">13</div>
<div class="t" style="left:29px;top:468.15px;width:100px;height:18px;overflow:hidden;font-size:14px;color:#000">Alda</div>
<div class="t" style="left:132px;top:468.15px;width:167px;height:18px;overflow:hidden;font-size:14px;color:#000">de Vries</div>
<div class="t" style="left:302px;top:468.15px;width:149px;height:18px;overflow:hidden;font-size:14px;color:#000">Venus 2</div>
<div class="t" style="left:454px;top:468.15px;width:109px;height:18px;overflow:hidden;font-size:14px;color:#000">8423 TJ</div>
<div class="t" style="left:566px;top:468.15px;width:125px;height:18px;overflow:hidden;font-size:14px;color:#000">Apeldoorn</div>
<div class="t" style="left:692px;top:468.15px;width:159.5px;text-align:right;font-size:14px;color:#000">1</div>
<div class="t" style="left:1px;top:489.92px;width:25px;text-align:center;font-size:12.5px;color:#217346">14</div>
<div class="t" style="left:29px;top:488.15px;width:100px;height:18px;overflow:hidden;font-size:14px;color:#000">Miep</div>
<div class="t" style="left:132px;top:488.15px;width:167px;height:18px;overflow:hidden;font-size:14px;color:#000">Schonewille</div>
<div class="t" style="left:302px;top:488.15px;width:149px;height:18px;overflow:hidden;font-size:14px;color:#000">Kortsteekterweg 30</div>
<div class="t" style="left:454px;top:488.15px;width:109px;height:18px;overflow:hidden;font-size:14px;color:#000">5551 SK</div>
<div class="t" style="left:566px;top:488.15px;width:125px;height:18px;overflow:hidden;font-size:14px;color:#000">Apeldoorn</div>
<div class="t" style="left:692px;top:488.15px;width:159.5px;text-align:right;font-size:14px;color:#000">14</div>
<div class="t" style="left:1px;top:509.92px;width:25px;text-align:center;font-size:12.5px;color:#2a2a2a">15</div>
<div class="t" style="left:29px;top:508.15px;width:100px;height:18px;overflow:hidden;font-size:14px;color:#000">Francis</div>
<div class="t" style="left:132px;top:508.15px;width:167px;height:18px;overflow:hidden;font-size:14px;color:#000">Linders Bergeman</div>
<div class="t" style="left:302px;top:508.15px;width:149px;height:18px;overflow:hidden;font-size:14px;color:#000">Verdistraat 31</div>
<div class="t" style="left:454px;top:508.15px;width:109px;height:18px;overflow:hidden;font-size:14px;color:#000">9666 HH</div>
<div class="t" style="left:566px;top:508.15px;width:125px;height:18px;overflow:hidden;font-size:14px;color:#000">Arnhem</div>
<div class="t" style="left:692px;top:508.15px;width:159.5px;text-align:right;font-size:14px;color:#000">1</div>
<div class="t" style="left:1px;top:529.92px;width:25px;text-align:center;font-size:12.5px;color:#2a2a2a">16</div>
<div class="t" style="left:29px;top:528.15px;width:100px;height:18px;overflow:hidden;font-size:14px;color:#000">Jacky</div>
<div class="t" style="left:132px;top:528.15px;width:167px;height:18px;overflow:hidden;font-size:14px;color:#000">smeijers</div>
<div class="t" style="left:302px;top:528.15px;width:149px;height:18px;overflow:hidden;font-size:14px;color:#000">Roerdomplaan 1a</div>
<div class="t" style="left:454px;top:528.15px;width:109px;height:18px;overflow:hidden;font-size:14px;color:#000">8302 NS</div>
<div class="t" style="left:566px;top:528.15px;width:125px;height:18px;overflow:hidden;font-size:14px;color:#000">Asperen</div>
<div class="t" style="left:692px;top:528.15px;width:159.5px;text-align:right;font-size:14px;color:#000">7</div>
<div class="t" style="left:1px;top:549.92px;width:25px;text-align:center;font-size:12.5px;color:#2a2a2a">17</div>
<div class="t" style="left:29px;top:548.15px;width:100px;height:18px;overflow:hidden;font-size:14px;color:#000">Willisa</div>
<div class="t" style="left:132px;top:548.15px;width:167px;height:18px;overflow:hidden;font-size:14px;color:#000">van Gemert</div>
<div class="t" style="left:302px;top:548.15px;width:149px;height:18px;overflow:hidden;font-size:14px;color:#000">Meeuwelaan 16</div>
<div class="t" style="left:454px;top:548.15px;width:109px;height:18px;overflow:hidden;font-size:14px;color:#000">8426 DP</div>
<div class="t" style="left:566px;top:548.15px;width:125px;height:18px;overflow:hidden;font-size:14px;color:#000">Assen</div>
<div class="t" style="left:692px;top:548.15px;width:159.5px;text-align:right;font-size:14px;color:#000">13</div>
<div class="t" style="left:1px;top:569.92px;width:25px;text-align:center;font-size:12.5px;color:#2a2a2a">18</div>
<div class="t" style="left:29px;top:568.15px;width:100px;height:18px;overflow:hidden;font-size:14px;color:#000">Thea</div>
<div class="t" style="left:132px;top:568.15px;width:167px;height:18px;overflow:hidden;font-size:14px;color:#000">Heesakkers</div>
<div class="t" style="left:302px;top:568.15px;width:149px;height:18px;overflow:hidden;font-size:14px;color:#000">Julianastraat 118</div>
<div class="t" style="left:454px;top:568.15px;width:109px;height:18px;overflow:hidden;font-size:14px;color:#000">2153 EL</div>
<div class="t" style="left:566px;top:568.15px;width:125px;height:18px;overflow:hidden;font-size:14px;color:#000">Barendrecht</div>
<div class="t" style="left:692px;top:568.15px;width:159.5px;text-align:right;font-size:14px;color:#000">6</div>
<div class="t" style="left:1px;top:589.92px;width:25px;text-align:center;font-size:12.5px;color:#2a2a2a">19</div>
<div class="t" style="left:29px;top:588.15px;width:100px;height:18px;overflow:hidden;font-size:14px;color:#000">D.D.</div>
<div class="t" style="left:132px;top:588.15px;width:167px;height:18px;overflow:hidden;font-size:14px;color:#000">Van der Blom</div>
<div class="t" style="left:302px;top:588.15px;width:149px;height:18px;overflow:hidden;font-size:14px;color:#000">Hunneschansallee 59</div>
<div class="t" style="left:454px;top:588.15px;width:109px;height:18px;overflow:hidden;font-size:14px;color:#000">3132 VG</div>
<div class="t" style="left:566px;top:588.15px;width:125px;height:18px;overflow:hidden;font-size:14px;color:#000">Barendrecht</div>
<div class="t" style="left:692px;top:588.15px;width:159.5px;text-align:right;font-size:14px;color:#000">12</div>
<div class="t" style="left:1px;top:609.92px;width:25px;text-align:center;font-size:12.5px;color:#2a2a2a">20</div>
<div class="t" style="left:29px;top:608.15px;width:100px;height:18px;overflow:hidden;font-size:14px;color:#000">Erik</div>
<div class="t" style="left:132px;top:608.15px;width:167px;height:18px;overflow:hidden;font-size:14px;color:#000">Nooij</div>
<div class="t" style="left:302px;top:608.15px;width:149px;height:18px;overflow:hidden;font-size:14px;color:#000">Haarlemmermeer str.113</div>
<div class="t" style="left:454px;top:608.15px;width:109px;height:18px;overflow:hidden;font-size:14px;color:#000">5551 PN</div>
<div class="t" style="left:566px;top:608.15px;width:125px;height:18px;overflow:hidden;font-size:14px;color:#000">Beegden</div>
<div class="t" style="left:692px;top:608.15px;width:159.5px;text-align:right;font-size:14px;color:#000">5</div>
<div class="t" style="left:1px;top:629.92px;width:25px;text-align:center;font-size:12.5px;color:#2a2a2a">21</div>
<div class="t" style="left:29px;top:628.15px;width:100px;height:18px;overflow:hidden;font-size:14px;color:#000">Petra</div>
<div class="t" style="left:132px;top:628.15px;width:167px;height:18px;overflow:hidden;font-size:14px;color:#000">Stahmer Ikink</div>
<div class="t" style="left:302px;top:628.15px;width:149px;height:18px;overflow:hidden;font-size:14px;color:#000">Nassaulaan 3</div>
<div class="t" style="left:454px;top:628.15px;width:109px;height:18px;overflow:hidden;font-size:14px;color:#000">3829 BP</div>
<div class="t" style="left:566px;top:628.15px;width:125px;height:18px;overflow:hidden;font-size:14px;color:#000">Belfeld</div>
<div class="t" style="left:692px;top:628.15px;width:159.5px;text-align:right;font-size:14px;color:#000">13</div>
<div class="t" style="left:1px;top:649.92px;width:25px;text-align:center;font-size:12.5px;color:#2a2a2a">22</div>
<div class="t" style="left:29px;top:648.15px;width:100px;height:18px;overflow:hidden;font-size:14px;color:#000">Helma</div>
<div class="t" style="left:132px;top:648.15px;width:167px;height:18px;overflow:hidden;font-size:14px;color:#000">Schuring</div>
<div class="t" style="left:302px;top:648.15px;width:149px;height:18px;overflow:hidden;font-size:14px;color:#000">Zwaluwstraat 238</div>
<div class="t" style="left:454px;top:648.15px;width:109px;height:18px;overflow:hidden;font-size:14px;color:#000">2809 NC</div>
<div class="t" style="left:566px;top:648.15px;width:125px;height:18px;overflow:hidden;font-size:14px;color:#000">Bennekom</div>
<div class="t" style="left:692px;top:648.15px;width:159.5px;text-align:right;font-size:14px;color:#000">2</div>
<div class="t" style="left:1px;top:669.92px;width:25px;text-align:center;font-size:12.5px;color:#2a2a2a">23</div>
<div class="t" style="left:29px;top:668.15px;width:100px;height:18px;overflow:hidden;font-size:14px;color:#000">Thea</div>
<div class="t" style="left:132px;top:668.15px;width:167px;height:18px;overflow:hidden;font-size:14px;color:#000">Hollander</div>
<div class="t" style="left:302px;top:668.15px;width:149px;height:18px;overflow:hidden;font-size:14px;color:#000">schoolstraat 18-18</div>
<div class="t" style="left:454px;top:668.15px;width:109px;height:18px;overflow:hidden;font-size:14px;color:#000">2724 HL</div>
<div class="t" style="left:566px;top:668.15px;width:125px;height:18px;overflow:hidden;font-size:14px;color:#000">Bergen Nh</div>
<div class="t" style="left:692px;top:668.15px;width:159.5px;text-align:right;font-size:14px;color:#000">14</div>
<div class="t" style="left:1px;top:689.92px;width:25px;text-align:center;font-size:12.5px;color:#2a2a2a">24</div>
<div class="t" style="left:29px;top:688.15px;width:100px;height:18px;overflow:hidden;font-size:14px;color:#000">Anneke</div>
<div class="t" style="left:132px;top:688.15px;width:167px;height:18px;overflow:hidden;font-size:14px;color:#000">van Maanen</div>
<div class="t" style="left:302px;top:688.15px;width:149px;height:18px;overflow:hidden;font-size:14px;color:#000">Wilhelminastraat 4</div>
<div class="t" style="left:454px;top:688.15px;width:109px;height:18px;overflow:hidden;font-size:14px;color:#000">5995 XR</div>
<div class="t" style="left:566px;top:688.15px;width:125px;height:18px;overflow:hidden;font-size:14px;color:#000">Bergen Op Zoom</div>
<div class="t" style="left:692px;top:688.15px;width:159.5px;text-align:right;font-size:14px;color:#000">8</div>
<div class="r" style="left:904px;top:483px;width:67px;height:23px;border:2px solid #217346"></div>
<div class="r" style="left:966px;top:501px;width:7px;height:7px;background:#fff;"></div>
<div class="r" style="left:967px;top:502px;width:5px;height:5px;background:#217346;"></div>
<div class="r" style="left:1016px;top:205px;width:20px;height:503px;background:#e6e6e6;"></div>
<div class="r" style="left:1018px;top:207px;width:15px;height:15px;background:#fff;border:1px solid #c6c6c6"></div>
<svg class="s" style="left:1021px;top:212px;" width="9" height="5" viewBox="0 0 9 5"><path d="M0 4.5L4.5 0 9 4.5z" fill="#777"/></svg>
<div class="r" style="left:1018px;top:221px;width:15px;height:57px;background:#fff;border:1px solid #c6c6c6"></div>
<div class="r" style="left:1018px;top:278px;width:15px;height:416px;background:#dcdcdc;"></div>
<div class="r" style="left:1018px;top:694px;width:15px;height:15px;background:#fff;border:1px solid #c6c6c6"></div>
<svg class="s" style="left:1021px;top:699px;" width="9" height="5" viewBox="0 0 9 5"><path d="M0 0L4.5 4.5 9 0z" fill="#777"/></svg>
<div class="r" style="left:1px;top:708px;width:1035px;height:28px;background:#e6e6e6;"></div>
<div class="r" style="left:1px;top:708px;width:1015px;height:1px;background:#a8a8a8;"></div>
<div class="r" style="left:1014px;top:205px;width:1px;height:504px;background:#a8a8a8;"></div>
<svg class="s" style="left:27px;top:717px;" width="6" height="9" viewBox="0 0 6 9"><path d="M5 0v9L0 4.5z" fill="#c0c0c0"/></svg>
<svg class="s" style="left:56px;top:717px;" width="6" height="9" viewBox="0 0 6 9"><path d="M0 0v9l5-4.5z" fill="#c0c0c0"/></svg>
<div class="r" style="left:101px;top:708px;width:58px;height:25px;background:#fff;border-left:1px solid #c6c6c6;border-right:1px solid #c6c6c6"></div>
<div class="r" style="left:101px;top:731px;width:58px;height:2px;background:#217346;"></div>
<div class="t" style="left:113px;top:715.84px;font-size:12px;color:#217346;font-weight:bold;">Blad1</div>
<svg class="s" style="left:191px;top:713px;" width="17" height="17" viewBox="0 0 17 17"><circle cx="8.5" cy="8.5" r="7.5" fill="none" stroke="#777" stroke-width="1.3"/><path d="M8.5 4.5v8M4.5 8.5h8" stroke="#777" stroke-width="1.5"/></svg>
<div class="r" style="left:622px;top:718px;width:2px;height:2px;background:#a8a8a8;"></div>
<div class="r" style="left:622px;top:722px;width:2px;height:2px;background:#a8a8a8;"></div>
<div class="r" style="left:622px;top:726px;width:2px;height:2px;background:#a8a8a8;"></div>
<div class="r" style="left:639px;top:715px;width:376px;height:15px;background:#d9d9d9;border:1px solid #c6c6c6"></div>
<div class="r" style="left:639px;top:715px;width:16px;height:15px;background:#fff;border:1px solid #b0b0b0"></div>
<svg class="s" style="left:643px;top:718px;" width="6" height="9" viewBox="0 0 6 9"><path d="M5 0v9L0 4.5z" fill="#777"/></svg>
<div class="r" style="left:654px;top:715px;width:302px;height:15px;background:#fff;border:1px solid #b0b0b0"></div>
<div class="r" style="left:1000px;top:715px;width:15px;height:15px;background:#fff;border:1px solid #b0b0b0"></div>
<svg class="s" style="left:1006px;top:718px;" width="6" height="9" viewBox="0 0 6 9"><path d="M0 0v9l5-4.5z" fill="#777"/></svg>
<div class="r" style="left:1px;top:736px;width:1035px;height:22px;background:#f1f1f1;"></div>
<div class="r" style="left:1px;top:736px;width:1035px;height:1px;background:#c0c0c0;"></div>
<div class="t" style="left:8px;top:741.69px;font-size:11px;color:#333;font-weight:normal;">Gereed</div>
<svg class="s" style="left:65px;top:740px;" width="14" height="14" viewBox="0 0 14 14"><path d="M1.5 6v6.5h11V1.5H7" fill="#fff" stroke="#777" stroke-width="1.2"/><rect x="7" y="1" width="6" height="2.6" fill="#777"/><circle cx="3" cy="3" r="3" fill="#777"/><path d="M6 6.5h2M9 6.5h2M3 8.8h2M6 8.8h2M9 8.8h2M3 10.8h2M6 10.8h2M9 10.8h2" stroke="#777" stroke-width="1.2"/></svg>
<div class="r" style="left:733px;top:737px;width:38px;height:21px;background:#c8c8c8;"></div>
<svg class="s" style="left:745px;top:740px;" width="13" height="13" viewBox="0 0 13 13"><rect x="0.5" y="0.5" width="12" height="12" fill="none" stroke="#666"/><path d="M4.5 1v11M8.5 1v11M1 4.5h11M1 8.5h11" stroke="#666"/></svg>
<svg class="s" style="left:783px;top:740px;" width="14" height="13" viewBox="0 0 14 13"><rect x="0.5" y="0.5" width="13" height="12" fill="none" stroke="#555"/><rect x="3.5" y="2.5" width="7" height="8" fill="none" stroke="#555"/><path d="M5 4.5h4M5 6.5h4M5 8.5h4" stroke="#555"/></svg>
<svg class="s" style="left:821px;top:740px;" width="14" height="13" viewBox="0 0 14 13"><rect x="0.5" y="0.5" width="13" height="12" fill="none" stroke="#555"/><path d="M0.5 7.5h8V0.5M3.5 1v4.5M5.5 1v4.5" fill="none" stroke="#555"/></svg>
<div class="r" style="left:852px;top:746px;width:6px;height:2px;background:#555;"></div>
<div class="r" style="left:862px;top:746px;width:100px;height:1px;background:#999;"></div>
<div class="r" style="left:910px;top:741px;width:4px;height:11px;background:#666;"></div>
<svg class="s" style="left:966px;top:742px;" width="9" height="9" viewBox="0 0 9 9"><path d="M4.5 0v9M0 4.5h9" stroke="#555" stroke-width="2"/></svg>
<div class="t" style="left:990px;top:741.69px;font-size:11px;color:#333;font-weight:normal;">100%</div>
<div class="r" style="left:669px;top:138px;width:349px;height:157px;background:#fff;border:1px solid #c6c6c6;box-shadow:1px 1px 2px rgba(0,0,0,0.15)"></div>
<div class="r" style="left:671px;top:191px;width:345px;height:51px;background:#c5c5c5;"></div>
<svg class="s" style="left:679px;top:152px;" width="28" height="25" viewBox="0 0 28 25"><rect x="0.5" y="0.5" width="27" height="19" fill="#fff" stroke="#777"/><path d="M9.5 1v18.5M18.5 1v18.5M1 5.5h26.5M1 10.5h26.5M1 15.5h26.5" stroke="#888"/><path d="M2 4.5l6-3M11 4.5l6-3M20 4.5l6-3" stroke="#6a9fd8" stroke-width="0.9"/><path d="M2 9.5l6-3M2 14.5l6-3M2 19l6-3" stroke="#6a9fd8" stroke-width="0.9"/><rect x="10" y="6" width="8" height="4" fill="#2c5f9e"/><path d="M0.5 19.5v3.5q0 1 1 1h7l1-1.5M9.5 19.5v3.5q0 1 1 1h6l2-2.5" fill="none" stroke="#777"/></svg>
<svg class="s" style="left:679px;top:203px;" width="28" height="25" viewBox="0 0 28 25"><rect x="0.5" y="0.5" width="27" height="19" fill="#fff" stroke="#777"/><path d="M9.5 1v18.5M18.5 1v18.5M1 5.5h26.5M1 10.5h26.5M1 15.5h26.5" stroke="#888"/><path d="M2 4.5l6-3M11 4.5l6-3M20 4.5l6-3" stroke="#6a9fd8" stroke-width="0.9"/><path d="M0.5 19.5v3.5q0 1 1 1h7l1-1.5M9.5 19.5v3.5q0 1 1 1h6l2-2.5" fill="none" stroke="#777"/></svg>
<svg class="s" style="left:679px;top:254px;" width="28" height="25" viewBox="0 0 28 25"><rect x="0.5" y="0.5" width="27" height="19" fill="#fff" stroke="#777"/><path d="M9.5 1v18.5M18.5 1v18.5M1 5.5h26.5M1 10.5h26.5M1 15.5h26.5" stroke="#888"/><path d="M2 4.5l6-3M2 9.5l6-3M2 14.5l6-3M2 19l6-3" stroke="#6a9fd8" stroke-width="0.9"/><path d="M0.5 19.5v3.5q0 1 1 1h7l1-1.5M9.5 19.5v3.5q0 1 1 1h6l2-2.5" fill="none" stroke="#777"/></svg>
<div class="t" style="left:723px;top:144.05px;font-size:11.75px;color:#444;font-weight:bold"><span style="text-decoration:underline">T</span>itels blokkeren</div>
<div class="t" style="left:723px;top:161.93px;font-size:11.9px;color:#555;font-weight:normal;">Rijen en kolommen in beeld houden terwijl de rest van</div>
<div class="t" style="left:723px;top:176.93px;font-size:11.9px;color:#555;font-weight:normal;">het werkblad schuift (op basis van de huidige selectie).</div>
<div class="t" style="left:723px;top:194.65px;font-size:11.75px;color:#444;font-weight:bold"><span style="text-decoration:underline">B</span>ovenste rij blokkeren</div>
<div class="t" style="left:723px;top:212.25px;font-size:11.75px;color:#333;font-weight:normal;">De bovenste rij zichtbaar houden wanneer de rest van</div>
<div class="t" style="left:723px;top:226.75px;font-size:11.75px;color:#333;font-weight:normal;">het werkblad verschuift.</div>
<div class="t" style="left:723px;top:245.05px;font-size:11.75px;color:#444;font-weight:bold"><span style="text-decoration:underline">E</span>erste kolom blokkeren</div>
<div class="t" style="left:723px;top:262.70px;font-size:11.7px;color:#555;font-weight:normal;">De eerste kolom zichtbaar houden wanneer de rest</div>
<div class="t" style="left:723px;top:278.10px;font-size:11.7px;color:#555;font-weight:normal;">van het werkblad verschuift.</div>
</body></html>
